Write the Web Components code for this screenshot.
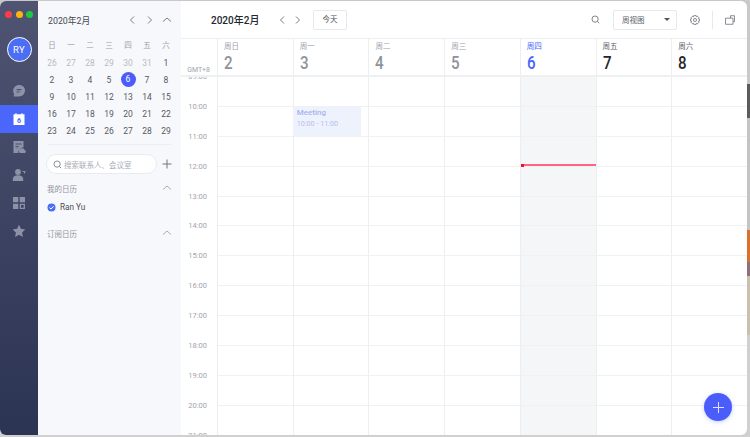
<!DOCTYPE html>
<html lang="zh">
<head>
<meta charset="utf-8">
<title>日历</title>
<style>
  html, body { margin: 0; height: 100%; overflow: hidden; }
  body {
    background: linear-gradient(to bottom, #c9c9c9 0 84px, #5b5b5b 84px 118px, #c4c4c4 118px 230px, #d9702c 230px 262px, #8f6f78 262px 276px, #c9c0ae 276px 335px, #d0d0d0 335px);
    font-family: Roboto, "Noto Sans CJK SC", sans-serif;
  }
</style>
</head>
<body>
<cal-app></cal-app>

<script>
const FONT = 'Roboto, "Noto Sans CJK SC", sans-serif';
const chevron = (dir) => {
  const d = { left: 'M6 1.5 2.5 5 6 8.5', right: 'M3 1.5 6.5 5 3 8.5', up: 'M1 6.5 5 3l4 3.5' }[dir];
  return `<svg width="10" height="10" viewBox="0 0 10 10" fill="none" stroke="currentColor" stroke-width="1"><path d="${d}"/></svg>`;
};
const searchIcon = '<svg width="9" height="9" viewBox="0 0 11 11" fill="none" stroke="currentColor" stroke-width="1.100"><circle cx="5" cy="5" r="3.8"/><path d="M7.8 7.8 10 10"/></svg>';

// 8 toothed outline for the settings icon
const gearPath = () => {
  const pts = [];
  for (let i = 0; i < 8; i += 1) {
    const a = (i * Math.PI) / 4;
    [[-0.26, 5], [0.26, 5], [0.42, 3.9]].forEach(([off, r]) => {
      pts.push(`${(5.5 + r * Math.cos(a + off)).toFixed(2)} ${(5.5 + r * Math.sin(a + off)).toFixed(2)}`);
    });
  }
  return 'M' + pts.join('L') + 'Z';
};

const appTemplate = document.createElement('template');
appTemplate.innerHTML = `
  <style>
    :host {
      display: flex;
      width: 747px;
      height: 434px;
      margin-top: 1px;
      border-radius: 6px;
      overflow: hidden;
      background: #fff;
      font-family: ${FONT};
    }
    main { flex: 1; min-width: 0; display: flex; flex-direction: column; position: relative; }
  </style>
  <cal-rail></cal-rail>
  <cal-sidebar></cal-sidebar>
  <main>
    <cal-topbar></cal-topbar>
    <week-header></week-header>
    <week-grid></week-grid>
    <add-button></add-button>
  </main>
`;
class CalApp extends HTMLElement {
  constructor() {
    super();
    this.attachShadow({ mode: 'open' }).appendChild(appTemplate.content.cloneNode(true));
  }
}

const railTemplate = document.createElement('template');
railTemplate.innerHTML = `
  <style>
    :host {
      display: flex;
      flex-direction: column;
      align-items: center;
      width: 38px;
      flex: none;
      background: linear-gradient(to bottom, #4e5472, #2c3453);
      color: #8d92a8;
    }
    .lights { display: flex; gap: 3.5px; margin-top: 10px; }
    .lights i { width: 7px; height: 7px; border-radius: 50%; }
    .avatar {
      box-sizing: border-box;
      width: 25px;
      height: 25px;
      margin-top: 19px;
      border: 1px solid #fff;
      border-radius: 50%;
      background: #4c6ef5;
      color: #fff;
      font-size: 9.5px;
      line-height: 23px;
      text-align: center;
      letter-spacing: .3px;
    }
    .item { width: 100%; height: 28px; display: flex; align-items: center; justify-content: center; }
    .item.first { margin-top: 15px; }
    .item.active { background: #4a66fb; }
    svg { display: block; }
  </style>
  <div class="lights">
    <i style="background:#fc3d48"></i><i style="background:#fdb30f"></i><i style="background:#1fc93f"></i>
  </div>
  <div class="avatar">RY</div>
  <div class="item first">
    <svg width="14" height="14" viewBox="0 0 14 14"><path fill="currentColor" d="M7.2 1C10.6 1 13 3.4 13 6.6c0 3.300-2.600 5.900-6 5.900H2.300c-.6 0-.9-.5-.6-1l.7-1.200C1.500 9.300 1.200 8 1.200 6.800 1.200 3.500 3.800 1 7.200 1z"/><path stroke="#4a5070" stroke-width="1.100" d="M4.600 5.600h4.800M4.600 8h3"/></svg>
  </div>
  <div class="item active">
    <svg width="14" height="14" viewBox="0 0 14 14"><path fill="#fff" d="M1.500 2.200h2V1h1v1.200h5V1h1v1.200h2V13h-11z"/><text x="7" y="11" text-anchor="middle" font-size="7" font-weight="700" fill="#4a66fb" font-family="Roboto">6</text></svg>
  </div>
  <div class="item">
    <svg width="14" height="14" viewBox="0 0 14 14"><path fill="currentColor" d="M1.500 1h10v6.500a3 3 0 0 0-3.600 2.400A2.200 2.200 0 0 0 6.500 13h-5z"/><path stroke="#474d6c" d="M3.500 4h6M3.500 6.500h3M5 8.500l1-1"/><path fill="currentColor" d="M8.200 13a1.700 1.700 0 0 1-.3-3.300 2.500 2.500 0 0 1 4.700.4 1.500 1.500 0 0 1 .2 2.900z"/></svg>
  </div>
  <div class="item">
    <svg width="14" height="14" viewBox="0 0 14 14"><circle cx="6" cy="4" r="2.900" fill="currentColor"/><path fill="currentColor" d="M.8 13v-2c0-2 2-3.700 5.200-3.700s5.200 1.700 5.200 3.700v2z"/><path stroke="currentColor" d="M10.500 3.500h3M12.500 3.500v2"/></svg>
  </div>
  <div class="item">
    <svg width="14" height="14" viewBox="0 0 14 14"><path fill="currentColor" d="M1 1h5.300v5.300H1zM7.700 1H13v5.300H7.700zM1 7.700h5.300V13H1z"/><path fill="none" stroke="currentColor" stroke-width="1.300" d="M8.400 8.400h3.900v3.900H8.400z"/></svg>
  </div>
  <div class="item">
    <svg width="14" height="14" viewBox="0 0 14 14"><path fill="currentColor" d="m7 .8 1.900 4 4.400.6-3.200 3.100.8 4.400L7 10.800l-3.900 2.100.8-4.400L.7 5.400l4.400-.6z"/></svg>
  </div>
`;
class CalRail extends HTMLElement {
  constructor() {
    super();
    this.attachShadow({ mode: 'open' }).appendChild(railTemplate.content.cloneNode(true));
  }
}

const sidebarTemplate = document.createElement('template');
sidebarTemplate.innerHTML = `
  <style>
    :host {
      display: block;
      box-sizing: border-box;
      width: 143px;
      flex: none;
      padding: 0 9px;
      background: #f7f8fb;
      color: #3f4450;
      font-size: 9px;
    }
    .head { display: flex; align-items: center; justify-content: space-between; height: 12px; }
    .title { color: #8f939c; font-size: 7.500px; }
    .chev { color: #a9adb5; display: flex; }
    hr { border: 0; height: 1px; background: #eceef2; margin: 0 1px 9px; }
    .search-row { display: flex; align-items: center; gap: 5px; margin-left: -1px; }
    .search {
      box-sizing: border-box;
      flex: 1;
      height: 20px;
      display: flex;
      align-items: center;
      gap: 2px;
      padding-left: 6px;
      border: 1px solid #e9ebf0;
      border-radius: 10px;
      background: #fff;
      color: #7e838c;
    }
    .search span { color: #a8acb4; font-size: 7.500px; white-space: nowrap; }
    .plus { color: #70747c; display: flex; }
    .mine { margin-top: 8px; }
    .person { display: flex; align-items: center; gap: 4px; margin-top: 7px; height: 12px; color: #4a4e58; font-size: 8.200px; }
    .subscribed { margin-top: 14px; }
    svg { display: block; }
  </style>
  <mini-month></mini-month>
  <hr>
  <div class="search-row">
    <div class="search">${searchIcon}<span>搜索联系人、会议室</span></div>
    <div class="plus"><svg width="10" height="10" viewBox="0 0 10 10" stroke="currentColor" fill="none"><path d="M5 .5v9M.5 5h9"/></svg></div>
  </div>
  <div class="head mine"><span class="title">我的日历</span><span class="chev">${chevron('up')}</span></div>
  <div class="person">
    <svg width="9" height="9" viewBox="0 0 9 9"><circle cx="4.500" cy="4.500" r="4" fill="#4c6ef5"/><path d="M2.500 4.600 4 6l2.600-2.800" fill="none" stroke="#fff"/></svg>
    <span>Ran Yu</span>
  </div>
  <div class="head subscribed"><span class="title">订阅日历</span><span class="chev">${chevron('up')}</span></div>
`;
class CalSidebar extends HTMLElement {
  constructor() {
    super();
    this.attachShadow({ mode: 'open' }).appendChild(sidebarTemplate.content.cloneNode(true));
  }
}

const monthTemplate = document.createElement('template');
monthTemplate.innerHTML = `
  <style>
    :host { display: block; padding-bottom: 5px; }
    .top { display: flex; align-items: center; height: 38px; }
    .label { flex: 1; padding-left: 1px; font-size: 8.800px; color: #464a54; }
    .nav { display: flex; gap: 7px; color: #7a7e87; }
    .grid {
      display: grid;
      grid-template-columns: repeat(7, 19px);
      grid-template-rows: 20px;
      grid-auto-rows: 17px;
      justify-content: center;
      margin: -5px 0 0 -1px;
    }
    .grid div { display: flex; align-items: center; justify-content: center; font-size: 8.500px; color: #555962; }
    .grid .week { color: #9a9ea6; font-size: 7.500px; }
    .grid .muted { color: #b8bbc2; }
    .grid .today span {
      width: 15px; height: 15px; border-radius: 50%;
      background: #4a5dfb; color: #fff; text-align: center; line-height: 15px;
    }
  </style>
  <div class="top">
    <span class="label">2020年2月</span>
    <div class="nav"></div>
  </div>
  <div class="grid"></div>
`;
class MiniMonth extends HTMLElement {
  constructor() {
    super();
    this._shadowRoot = this.attachShadow({ mode: 'open' });
    this._shadowRoot.appendChild(monthTemplate.content.cloneNode(true));
    this.$grid = this._shadowRoot.querySelector('.grid');
    this._shadowRoot.querySelector('.nav').innerHTML = chevron('left') + chevron('right') + chevron('up');

    let html = '';
    for (const w of ['日', '一', '二', '三', '四', '五', '六']) {
      html += `<div class="week">${w}</div>`;
    }
    for (const d of [26, 27, 28, 29, 30, 31]) {
      html += `<div class="muted">${d}</div>`;
    }
    for (let d = 1; d <= 29; d += 1) {
      html += d === 6 ? `<div class="today"><span>${d}</span></div>` : `<div>${d}</div>`;
    }
    this.$grid.innerHTML = html;
  }
}

const topbarTemplate = document.createElement('template');
topbarTemplate.innerHTML = `
  <style>
    :host {
      display: flex;
      align-items: center;
      box-sizing: border-box;
      height: 38px;
      padding: 0 12px 0 30px;
      border-bottom: 1px solid #eceef0;
      color: #70747c;
    }
    .title { font-size: 10px; font-weight: 500; color: #23262d; width: 67px; white-space: nowrap; }
    .nav { display: flex; gap: 5px; color: #767a82; }
    .today {
      box-sizing: border-box;
      width: 34px; height: 20px; margin-left: 10px;
      border: 1px solid #e8e9ec; border-radius: 2px;
      font-size: 7.500px; line-height: 18px; text-align: center; color: #50545c;
    }
    .spacer { flex: 1; }
    .select {
      box-sizing: border-box;
      display: flex; align-items: center; justify-content: space-between;
      width: 64px; height: 20px; margin-left: 13px; padding: 0 6px 0 8px;
      border: 1px solid #e8e9ec; border-radius: 2px;
      font-size: 7.500px; color: #5c6068;
    }
    .select i { border: 3px solid transparent; border-top: 3px solid #555; border-bottom: 0; width: 0; height: 0; }
    .gear { margin-left: 13px; display: flex; }
    .sep { width: 1px; height: 18px; background: #e8e9ec; margin-left: 12px; }
    .win { margin-left: 12px; display: flex; }
    svg { display: block; }
  </style>
  <span class="title">2020年2月</span>
  <div class="nav">${chevron('left')}${chevron('right')}</div>
  <div class="today">今天</div>
  <div class="spacer"></div>
  ${searchIcon}
  <div class="select"><span>周视图</span><i></i></div>
  <div class="gear">
    <svg width="10" height="10" viewBox="0 0 11 11" fill="none" stroke="currentColor" stroke-width=".9"><path d="${gearPath()}"/><circle cx="5.500" cy="5.500" r="1.700"/></svg>
  </div>
  <div class="sep"></div>
  <div class="win">
    <svg width="10" height="10" viewBox="0 0 11 11" fill="none" stroke="currentColor" stroke-width=".9"><path d="M.6 3.500h5.400V.8h4.400v6.500H8.800v2.900H.6zM6 3.500h2.800v3.800"/></svg>
  </div>
`;
class CalTopbar extends HTMLElement {
  constructor() {
    super();
    this.attachShadow({ mode: 'open' }).appendChild(topbarTemplate.content.cloneNode(true));
  }
}

const headerTemplate = document.createElement('template');
headerTemplate.innerHTML = `
  <style>
    :host {
      display: grid;
      grid-template-columns: 36px repeat(7, 1fr);
      box-sizing: border-box;
      height: 38px;
      flex: none;
      position: relative;
      z-index: 1;
      background: #fff;
      border-bottom: 2px solid #eff0f2;
    }
    .gmt { align-self: end; padding-bottom: 1px; text-align: right; padding-right: 7px; font-size: 7px; color: #a0a4ab; white-space: nowrap; }
    .day { box-sizing: border-box; padding: 2px 0 0 6px; border-left: 1px solid #eceef0; }
    .name { font-size: 7.500px; line-height: 12px; color: #a0a4ab; }
    .num { display: inline-block; font-size: 18px; line-height: 20px; font-weight: 500; color: #8f9399; transform: scaleX(.84); transform-origin: left; }
    .now .name, .now .num { color: #4a66fb; }
    .next .name { color: #5c6068; }
    .next .num { color: #23262d; }
  </style>
  <div class="gmt">GMT+8</div>
`;
class WeekHeader extends HTMLElement {
  constructor() {
    super();
    this._shadowRoot = this.attachShadow({ mode: 'open' });
    this._shadowRoot.appendChild(headerTemplate.content.cloneNode(true));
    const days = [['周日', 2], ['周一', 3], ['周二', 4], ['周三', 5], ['周四', 6], ['周五', 7], ['周六', 8]];
    days.forEach(([name, num]) => {
      const cell = document.createElement('div');
      cell.className = 'day' + (num === 6 ? ' now' : num > 6 ? ' next' : '');
      cell.innerHTML = `<div class="name">${name}</div><div class="num">${num}</div>`;
      this._shadowRoot.appendChild(cell);
    });
  }
}

const gridTemplate = document.createElement('template');
gridTemplate.innerHTML = `
  <style>
    :host {
      display: grid;
      grid-template-columns: 36px repeat(7, 1fr);
      flex: 1;
      min-height: 0;
      overflow: hidden;
      --hour: 29.9px;
    }
    .col { position: relative; border-left: 1px solid #eceef0; }
    .gutter { border-left: 0; }
    .cell { box-sizing: border-box; height: var(--hour); border-bottom: 1px solid #f0f1f3; }
    .gutter .cell { border-bottom: 0; text-align: right; padding-right: 10px; font-size: 7.500px; color: #a0a4ab; }
    .gutter .cell span { display: block; transform: translateY(-50%); line-height: 10px; }
    .today { background: #f5f6f8; }
    .event {
      position: absolute; left: -1px; top: 30px; width: 68px; height: 29px;
      box-sizing: border-box; padding: 0 4px;
      background: #eef2fd; color: #b6c0ee; font-size: 7.200px; line-height: 11px;
    }
    .event b { display: block; font-size: 8px; font-weight: 500; color: #a7b2ee; }
    .line { position: absolute; left: 0; right: 0; top: 87px; height: 2px; background: #ff6580; }
    .line::before { content: ""; position: absolute; left: 0; top: -.5px; width: 3px; height: 3px; background: #f0103f; }
  </style>
`;
class WeekGrid extends HTMLElement {
  constructor() {
    super();
    this._shadowRoot = this.attachShadow({ mode: 'open' });
    this._shadowRoot.appendChild(gridTemplate.content.cloneNode(true));

    const gutter = document.createElement('div');
    gutter.className = 'col gutter';
    for (let h = 9; h <= 21; h += 1) {
      gutter.innerHTML += `<div class="cell"><span>${String(h).padStart(2, '0')}:00</span></div>`;
    }
    this._shadowRoot.appendChild(gutter);

    for (let i = 0; i < 7; i += 1) {
      const col = document.createElement('div');
      col.className = i === 4 ? 'col today' : 'col';
      col.innerHTML = '<div class="cell"></div>'.repeat(13);
      if (i === 1) {
        col.innerHTML += '<div class="event"><b>Meeting</b>10:00 - 11:00</div>';
      }
      if (i === 4) {
        col.innerHTML += '<div class="line"></div>';
      }
      this._shadowRoot.appendChild(col);
    }
  }
}

class AddButton extends HTMLElement {
  constructor() {
    super();
    this.attachShadow({ mode: 'open' }).innerHTML = `
      <style>
        :host {
          position: absolute; right: 15px; bottom: 14px;
          width: 28px; height: 28px; border-radius: 50%;
          display: flex; align-items: center; justify-content: center;
          background: #4a5dfb; color: #dfe3ff; z-index: 2;
          box-shadow: 0 1px 4px rgba(74, 93, 251, .3);
        }
        svg { display: block; }
      </style>
      <svg width="11" height="11" viewBox="0 0 11 11" stroke="currentColor" fill="none"><path d="M5.500 0v11M0 5.500h11"/></svg>
    `;
  }
}

customElements.define('mini-month', MiniMonth);
customElements.define('cal-rail', CalRail);
customElements.define('cal-sidebar', CalSidebar);
customElements.define('cal-topbar', CalTopbar);
customElements.define('week-header', WeekHeader);
customElements.define('week-grid', WeekGrid);
customElements.define('add-button', AddButton);
customElements.define('cal-app', CalApp);
</script>
</body>
</html>
